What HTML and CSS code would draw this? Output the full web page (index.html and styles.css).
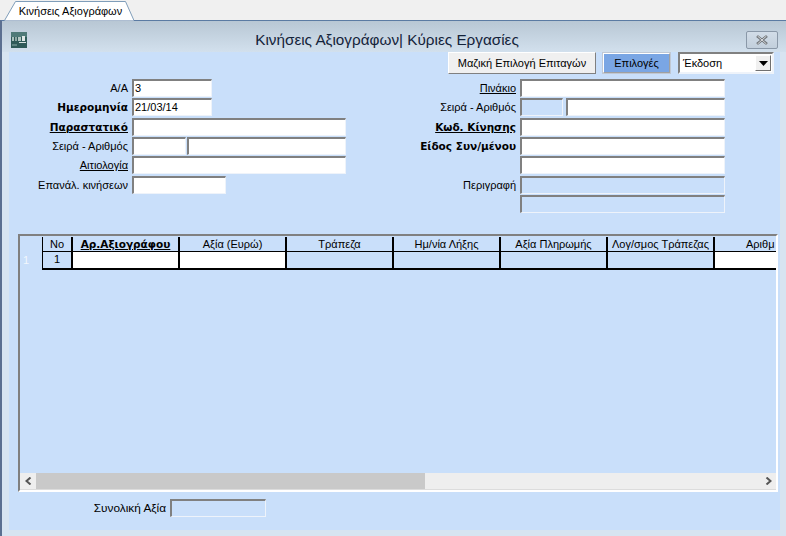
FILE: index.html
```html
<!DOCTYPE html>
<html lang="el">
<head>
<meta charset="utf-8">
<title>Κινήσεις Αξιογράφων</title>
<link rel="stylesheet" href="styles.css">
</head>
<body>
<div class="tabstrip">
  <div class="tab"><svg class="tab-shape" width="130" height="20" viewBox="0 0 130 20"><path d="M0.5 19.5 L11.5 0.5 H121.5 L130 19.5" fill="#fff" stroke="#7f9db9"/></svg><span class="tab-text">Κινήσεις Αξιογράφων</span></div>
</div>
<div class="window">
  <header class="titlebar">
    <svg class="app-icon" width="16" height="16" viewBox="0 0 16 16">
      <rect width="16" height="16" fill="#2f5a58"/>
      <rect x="0" y="0" width="16" height="5" fill="#4f7a78"/>
      <rect x="1" y="5" width="2" height="4" fill="#a9c0bc"/>
      <rect x="4" y="5" width="2" height="4" fill="#8fa8a4"/>
      <rect x="7" y="5" width="3" height="4" fill="#b5c8c4"/>
      <rect x="11" y="4" width="3" height="5" fill="#dfe8e6"/>
      <rect x="8" y="10" width="7" height="1" fill="#d8e2e0"/>
      <rect x="1" y="12" width="5" height="2" fill="#5f8582"/>
    </svg>
    <h1 class="title">Κινήσεις Αξιογράφων| Κύριες Εργασίες</h1>
    <button class="close" type="button" aria-label="Κλείσιμο"><svg width="14" height="10" viewBox="0 0 14 10"><path d="M2 1 L12 9 M12 1 L2 9" stroke="#6f7478" stroke-width="2.6" fill="none"/><path d="M2.5 1 L11.5 9 M11.5 1 L2.5 9" stroke="#f2f4f6" stroke-width="0.8" fill="none"/></svg></button>
  </header>
  <main class="client">
    <div class="toolbar">
      <button class="btn btn-mass" type="button">Μαζική Επιλογή Επιταγών</button>
      <button class="btn btn-options" type="button">Επιλογές</button>
      <div class="select"><span class="select-value">Έκδοση</span><span class="select-arrow"><svg width="9" height="5" viewBox="0 0 9 5"><path d="M0 0 H9 L4.5 5 Z" fill="#000"/></svg></span></div>
    </div>
    <div class="form">
      <section class="form-col col-left">
        <div class="row"><label class="lbl">Α/Α</label><div class="field w-80">3</div></div>
        <div class="row"><label class="lbl bold">Ημερομηνία</label><div class="field w-80">21/03/14</div></div>
        <div class="row"><label class="lbl bold under">Παραστατικό</label><div class="field grow"></div></div>
        <div class="row"><label class="lbl">Σειρά - Αριθμός</label><div class="field w-54"></div><div class="field grow"></div></div>
        <div class="row"><label class="lbl under">Αιτιολογία</label><div class="field grow"></div></div>
        <div class="row"><label class="lbl">Επανάλ. κινήσεων</label><div class="field w-94"></div></div>
      </section>
      <section class="form-col col-right">
        <div class="row"><label class="lbl under">Πινάκιο</label><div class="field grow"></div></div>
        <div class="row"><label class="lbl">Σειρά - Αριθμός</label><div class="field w-43 ro"></div><div class="field grow"></div></div>
        <div class="row"><label class="lbl bold under">Κωδ. Κίνησης</label><div class="field grow"></div></div>
        <div class="row"><label class="lbl bold">Είδος Συν/μένου</label><div class="field grow"></div></div>
        <div class="row"><label class="lbl"></label><div class="field grow"></div></div>
        <div class="row"><label class="lbl">Περιγραφή</label><div class="field grow ro"></div></div>
        <div class="row"><label class="lbl"></label><div class="field grow ro"></div></div>
      </section>
    </div>
    <section class="grid-box">
      <div class="grid-body">
        <div class="gutter"><span class="gutter-num">1</span></div>
        <div class="grid">
          <div class="cell head">No</div>
          <div class="cell head bold under">Αρ.Αξιογράφου</div>
          <div class="cell head">Αξία (Ευρώ)</div>
          <div class="cell head">Τράπεζα</div>
          <div class="cell head">Ημ/νία Λήξης</div>
          <div class="cell head">Αξία Πληρωμής</div>
          <div class="cell head">Λογ/σμος Τράπεζας</div>
          <div class="cell head end"><span class="clip">Αριθμ</span></div>
          <div class="cell num">1</div>
          <div class="cell edit"></div>
          <div class="cell edit"></div>
          <div class="cell"></div>
          <div class="cell"></div>
          <div class="cell"></div>
          <div class="cell"></div>
          <div class="cell edit end"></div>
        </div>
      </div>
      <div class="scrollbar">
        <span class="sb-btn"><svg width="7" height="8" viewBox="0 0 7 8"><path d="M5.5 0.5 L1.5 4 L5.5 7.5" stroke="#555" stroke-width="2" fill="none"/></svg></span>
        <span class="sb-thumb"></span>
        <span class="sb-track"></span>
        <span class="sb-btn"><svg width="7" height="8" viewBox="0 0 7 8"><path d="M1.5 0.5 L5.5 4 L1.5 7.5" stroke="#555" stroke-width="2" fill="none"/></svg></span>
      </div>
    </section>
    <div class="total"><label class="lbl total-lbl">Συνολική Αξία</label><div class="field w-96 ro"></div></div>
  </main>
</div>
</body>
</html>
```
FILE: styles.css
```css
* { box-sizing: border-box; }
html, body { margin: 0; padding: 0; }
body {
  width: 786px;
  height: 536px;
  overflow: hidden;
  background: #f0f0f0;
  font-family: "Liberation Sans", "Noto Sans", Arial, sans-serif;
  font-size: 11px;
  color: #000;
}
.tabstrip { height: 20px; padding: 2px 0 0 4px; display: flex; }
.tab { position: relative; width: 130px; height: 18px; display: flex; justify-content: center; align-items: center; }
.tab-shape { position: absolute; left: 0; top: -1px; }
.tab-text { position: relative; font-size: 11px; padding-left: 3px; color: #000; }
.window {
  height: 516px;
  background: #d7e4f1;
  border-left: 2px solid #5b6f90;
  border-top: 1px solid #5b7ba3;
  display: flex;
  flex-direction: column;
}
.titlebar {
  height: 31px;
  flex: none;
  background: linear-gradient(#b8c7d4, #d2e0ed);
  display: flex;
  align-items: center;
  padding: 0 8px 0 9px;
}
.app-icon { flex: none; margin-top: 6px; }
.title {
  flex: 1;
  margin: 6px 0 0 0;
  padding-left: 1px;
  text-align: center;
  font-size: 15.3px;
  font-weight: normal;
  color: #14233a;
}
.close {
  width: 32px;
  height: 18px;
  margin-top: 6px;
  padding: 0;
  border: 1px solid #8a98a8;
  border-radius: 2px;
  background: linear-gradient(#d2dde8, #c2cfdc);
  display: flex;
  align-items: center;
  justify-content: center;
}
.client {
  margin: 0 6px 0 7px;
  height: 478px;
  background: #c9dffa;
  flex: none;
}
.toolbar { display: flex; height: 22px; padding-left: 439px; }
.btn {
  height: 22px;
  padding: 0;
  font: inherit;
  color: #000;
  border: 1px solid #fff;
  border-right-color: #808080;
  border-bottom-color: #808080;
}
.btn-mass { width: 148px; background: #f0f0f0; }
.btn-options { width: 69px; margin-left: 6px; background: #7aa6e4; border: 2px solid #fff; border-right-color: #a0a0a0; border-bottom-color: #a0a0a0; outline: 1px solid #c0c8d4; outline-offset: -1px; }
.select {
  width: 96px;
  height: 22px;
  margin-left: 7px;
  background: #fff;
  border: 2px solid #808080;
  border-right-color: #eef3fa;
  border-bottom-color: #eef3fa;
  display: flex;
  align-items: center;
}
.select-value { flex: 1; padding-left: 3px; }
.select-arrow {
  width: 16px;
  height: 16px;
  background: #f0f0f0;
  border: 1px solid #fff;
  border-right-color: #707070;
  border-bottom-color: #707070;
  display: flex;
  align-items: center;
  justify-content: center;
  margin-right: 1px;
}
.form { display: flex; margin-top: 5px; height: 155px; }
.form-col { display: flex; flex-direction: column; gap: 1.33px; }
.col-left { width: 337px; }
.col-right { width: 379px; }
.row { display: flex; height: 18px; align-items: center; gap: 1px; }
.lbl { text-align: right; padding-right: 3px; white-space: nowrap; color: #000; }
.col-left .lbl { width: 122px; }
.col-right .lbl { width: 173px; }
.bold { font-family: "DejaVu Sans", Verdana, sans-serif; font-weight: bold; font-size: 10.5px; }
.under { text-decoration: underline; }
.field {
  height: 18px;
  background: #fff;
  border: 2px solid #808080;
  border-right: 1px solid #eef3fa;
  border-bottom: 1px solid #eef3fa;
  padding-left: 1px;
  line-height: 15px;
  white-space: nowrap;
  overflow: hidden;
}
.grow { flex: 1; }
.w-80 { width: 80px; }
.w-54 { width: 54px; }
.w-94 { width: 94px; }
.w-43 { width: 43px; margin-right: 2px; }
.w-96 { width: 96px; }
.ro { background: #c9dffa; }
.grid-box {
  width: 760px;
  height: 258px;
  margin: 0 0 0 9px;
  border: 2px solid #808080;
  border-right: 2px solid #fff;
  border-bottom: 2px solid #fff;
  display: flex;
  flex-direction: column;
}
.grid-body { flex: 1; display: flex; overflow: hidden; padding-top: 1px; }
.gutter { width: 22px; flex: none; }
.gutter-num { display: block; margin-top: 17px; padding-left: 3px; color: #f2f7fd; }
.grid {
  flex: none;
  width: 736px;
  display: grid;
  grid-template-columns: 30px repeat(6, 107px) 64px;
  grid-template-rows: 15px 16px;
  align-self: flex-start;
  border-left: 1px solid #000;
  border-bottom: 2px solid #000;
}
.cell {
  border-right: 2px solid #000;
  text-align: center;
  white-space: nowrap;
  overflow: hidden;
  line-height: 14px;
}
.head { border-bottom: 1px solid #000; }
.head.bold { font-size: 10.5px; }
.num { line-height: 15px; }
.edit { background: #fff; }
.end { border-right: 0; }
.head.end { text-align: left; padding-left: 31px; }
.scrollbar { height: 17px; flex: none; display: flex; background: #eeeeee; border-bottom: 1px solid #dcdcdc; }
.sb-btn { width: 16px; flex: none; display: flex; align-items: center; justify-content: center; }
.sb-thumb { width: 389px; background: #c9c9c9; }
.sb-track { flex: 1; }
.total { display: flex; align-items: center; height: 18px; margin-top: 7px; padding-left: 80px; gap: 1px; }
.total-lbl { width: 80px; font-size: 11.8px; }
```
